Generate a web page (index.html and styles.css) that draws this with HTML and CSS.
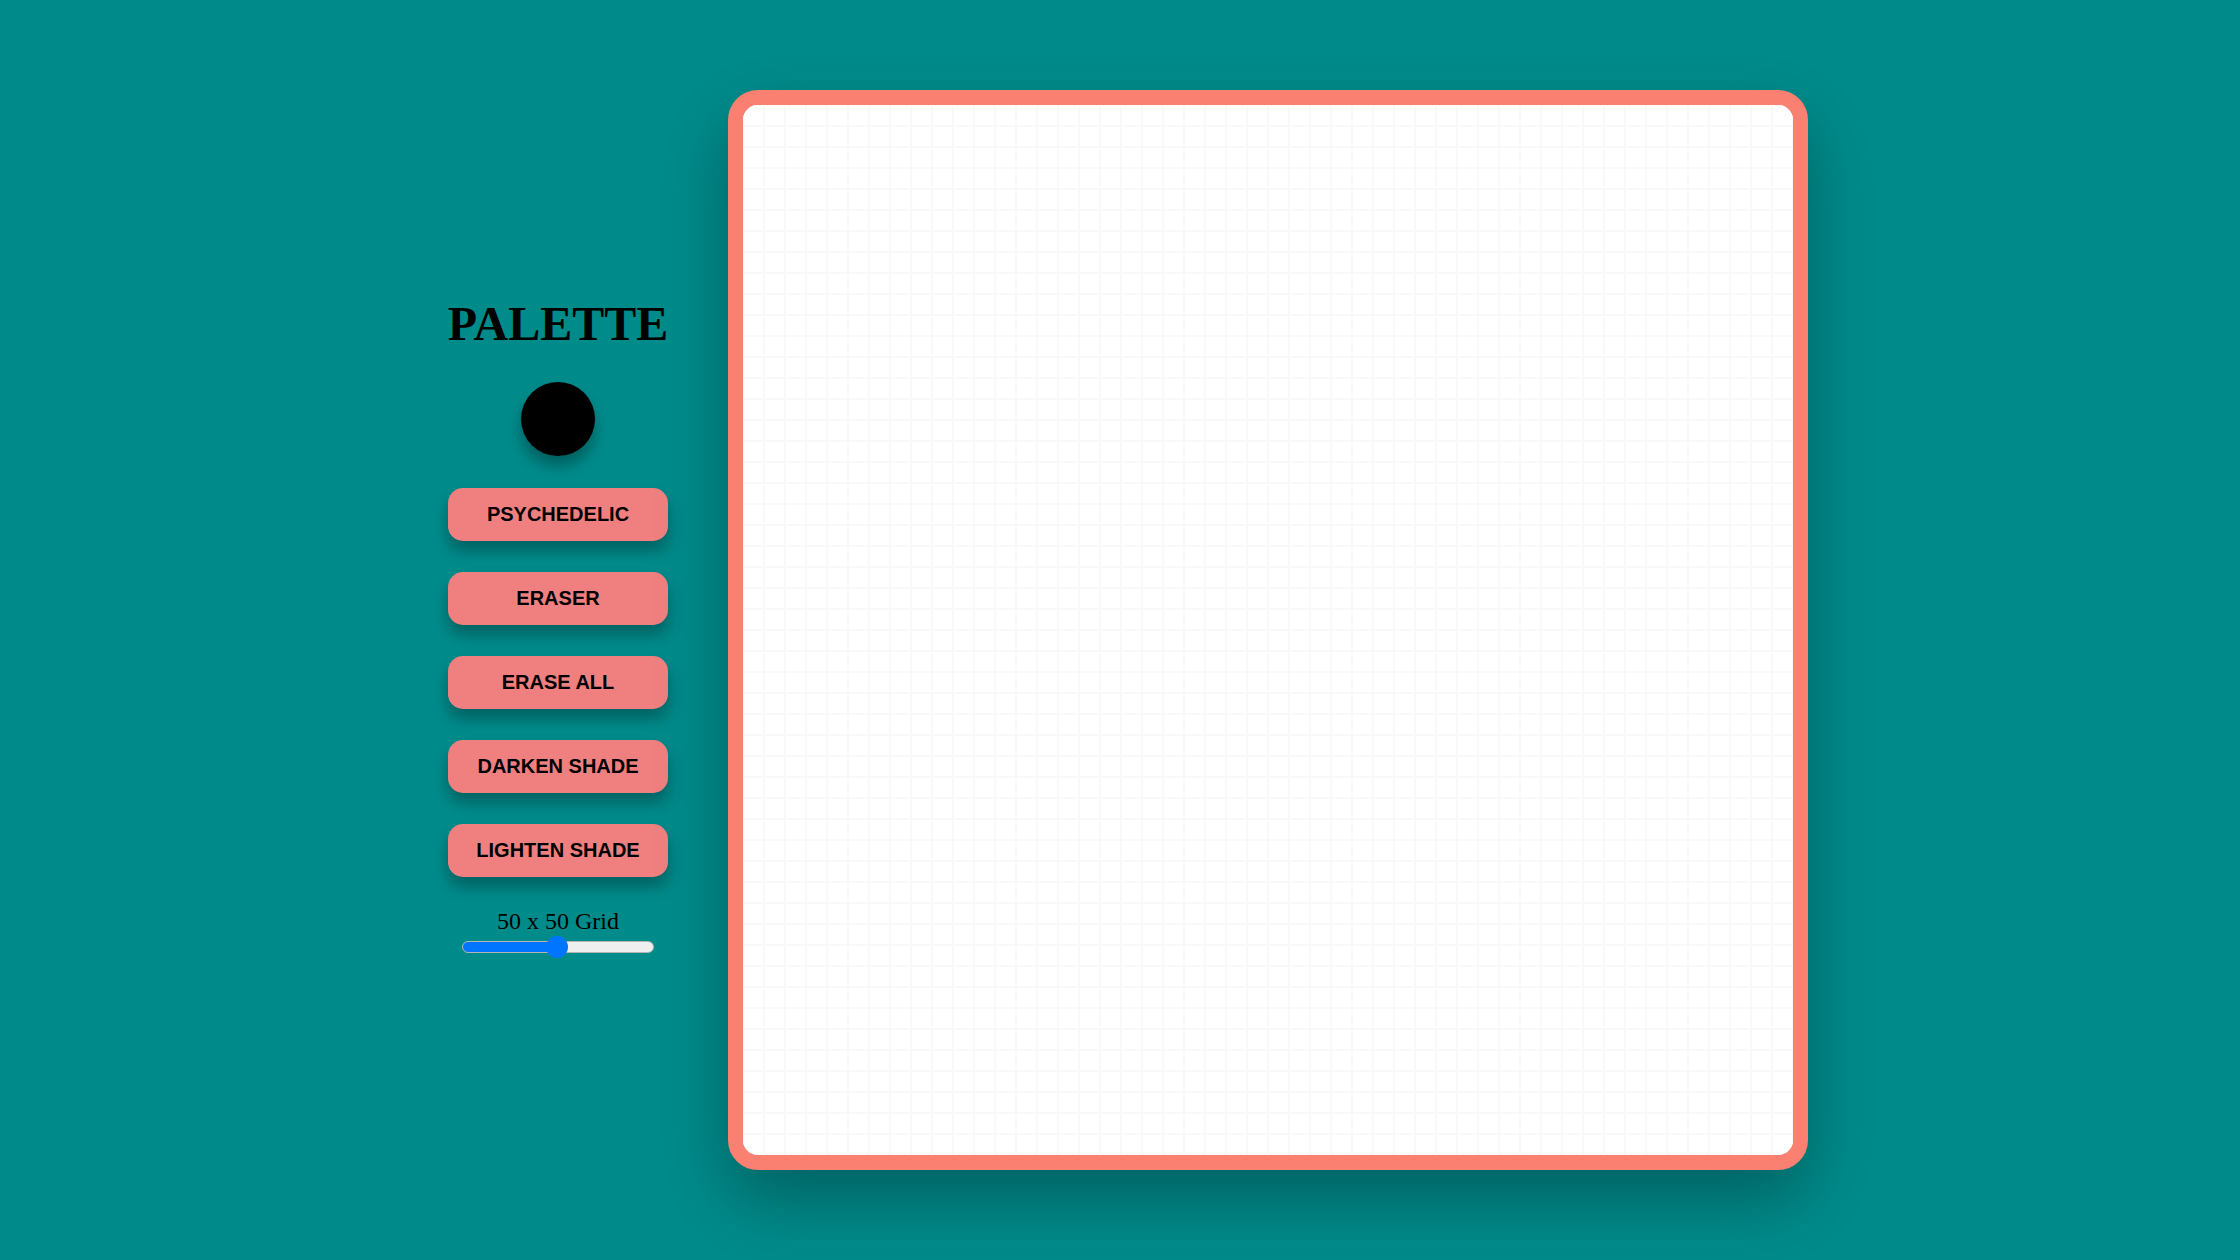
FILE: index.html
```html
<!DOCTYPE html>
<html lang="en">
<head>
<meta charset="utf-8">
<title>Etch-a-Sketch</title>
<link rel="stylesheet" href="styles.css">
</head>
<body>
<main class="app">
  <aside class="palette">
    <h1 class="palette-title">PALETTE</h1>
    <div class="swatch"></div>
    <div class="tools">
      <button class="tool-btn">PSYCHEDELIC</button>
      <button class="tool-btn">ERASER</button>
      <button class="tool-btn">ERASE ALL</button>
      <button class="tool-btn">DARKEN SHADE</button>
      <button class="tool-btn">LIGHTEN SHADE</button>
    </div>
    <label class="grid-label" for="size">50 x 50 Grid</label>
    <input class="grid-slider" id="size" type="range" min="1" max="100" value="50" style="--fill: 50%">
  </aside>
  <section class="board">
    <div class="canvas"></div>
  </section>
</main>
</body>
</html>
```
FILE: styles.css
```css
html, body {
  margin: 0;
  padding: 0;
  height: 100%;
}
body {
  background: #008b8b;
  font-family: "Liberation Serif", "Times New Roman", serif;
  overflow: hidden;
}
.app {
  height: 100%;
  box-sizing: border-box;
  padding-left: 16px;
  display: flex;
  align-items: center;
  justify-content: center;
  gap: 60px;
}
.palette {
  width: 220px;
  padding-bottom: 3px;
  display: flex;
  flex-direction: column;
  align-items: center;
}
.palette-title {
  margin: 0;
  font-size: 48px;
  line-height: 48px;
  font-weight: bold;
  color: #000;
}
.swatch {
  margin-top: 34px;
  width: 74px;
  height: 74px;
  border-radius: 50%;
  background: #000;
  box-shadow: 0 10px 15px rgba(0, 0, 0, 0.32);
}
.tools {
  margin-top: 32px;
  display: flex;
  flex-direction: column;
  gap: 31px;
  width: 100%;
}
.tool-btn {
  width: 220px;
  height: 53px;
  border: none;
  border-radius: 15px;
  background: #f08080;
  color: #000;
  font-family: "Liberation Sans", Arial, sans-serif;
  font-weight: bold;
  font-size: 20px;
  padding: 0;
  box-shadow: 0 10px 16px rgba(0, 0, 0, 0.3);
  cursor: pointer;
}
.grid-label {
  margin-top: 32px;
  font-size: 24px;
  line-height: 24px;
  color: #000;
}
.grid-slider {
  -webkit-appearance: none;
  appearance: none;
  margin: 3px 0 0;
  width: 192px;
  height: 22px;
  background: transparent;
}
.grid-slider::-webkit-slider-runnable-track {
  height: 12px;
  box-sizing: border-box;
  border: 1px solid #b5b5b5;
  border-radius: 6px;
  background: linear-gradient(to right, #0075ff var(--fill), #efefef var(--fill));
}
.grid-slider::-webkit-slider-thumb {
  -webkit-appearance: none;
  width: 22px;
  height: 22px;
  margin-top: -6px;
  border-radius: 50%;
  background: #0075ff;
  border: none;
}
.board {
  width: 1080px;
  height: 1080px;
  box-sizing: border-box;
  border: 15px solid #fa8072;
  border-radius: 30px;
  background: #fff;
  box-shadow: 0 30px 70px rgba(0, 0, 0, 0.3);
  overflow: hidden;
}
.canvas {
  width: 100%;
  height: 100%;
  background-color: #fff;
  background-image:
    linear-gradient(to right, #f9f9f9 1px, transparent 1px, transparent 20px, #f9f9f9 20px),
    linear-gradient(to bottom, #f9f9f9 1px, transparent 1px, transparent 20px, #f9f9f9 20px);
  background-size: 21px 21px;
}
```
